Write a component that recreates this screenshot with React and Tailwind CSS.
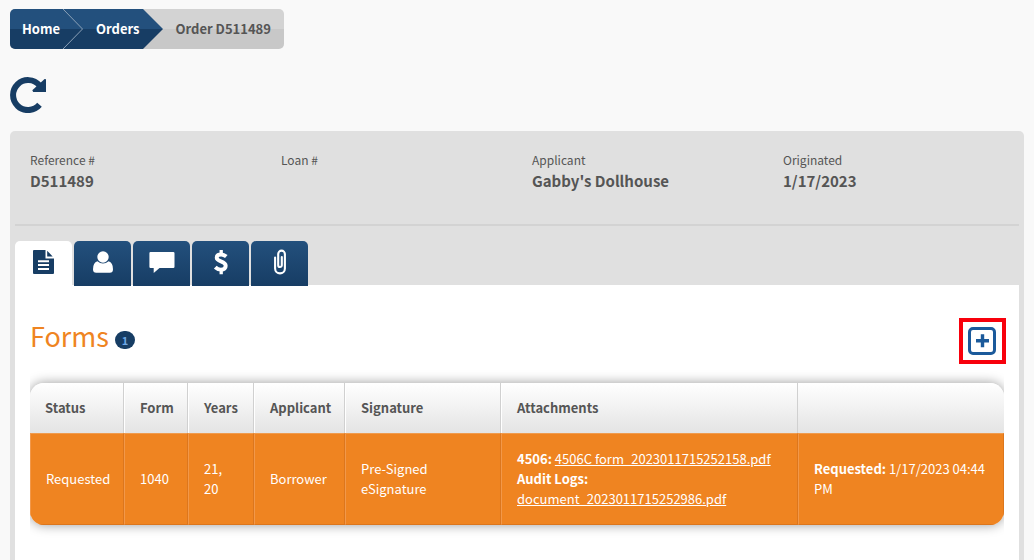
import React, { useState } from "react";

const details = [
  { label: "Reference #", value: "D511489" },
  { label: "Loan #", value: "" },
  { label: "Applicant", value: "Gabby's Dollhouse" },
  { label: "Originated", value: "1/17/2023" },
];

function RepeatIcon() {
  return (
    <svg width="36" height="36" viewBox="0 0 36 36" aria-hidden="true">
      <path
        d="M29.5 8.4A15 15 0 1 0 29.5 27.8"
        fill="none"
        stroke="#173d64"
        strokeWidth="6"
      />
      <path d="M36 2.2V15H23.2l-.9-1.8L34.6 2z" fill="#173d64" />
    </svg>
  );
}

function FileIcon() {
  return (
    <svg width="21" height="24" viewBox="0 0 21 24" fill="currentColor" aria-hidden="true">
      <path
        fillRule="evenodd"
        d="M1 0h11.500v8.500H21V23q0 1-1 1H1q-1 0-1-1V1q0-1 1-1zM5 10.200v2h11v-2zM5 14v2h11v-2zM5 18v2h11v-2z"
      />
      <path d="M14.200.8l5.500 5.700h-5.500z" />
    </svg>
  );
}

function UserIcon() {
  return (
    <svg width="20" height="22" viewBox="0 0 20 22" fill="currentColor" aria-hidden="true">
      <circle cx="10" cy="6" r="5.700" />
      <path d="M4.400 10.200Q7 12.600 10 12.600t5.600-2.400Q20 11.600 20 18.200q0 3.500-3.200 3.500H3.200Q0 21.700 0 18.200q0-6.600 4.400-8z" />
    </svg>
  );
}

function CommentIcon() {
  return (
    <svg width="26" height="22" viewBox="0 0 26 22" fill="currentColor" aria-hidden="true">
      <path d="M1.500 1h22.800q1.200 0 1.200 1.200v13.600q0 1.200-1.200 1.200H10.500L4.700 22V17H1.500Q.4 17 .4 15.800V2.200Q.4 1 1.500 1z" />
    </svg>
  );
}

function DollarIcon() {
  return (
    <svg width="14" height="26" viewBox="0 0 14 26" fill="none" stroke="currentColor" aria-hidden="true">
      <path
        d="M12.300 7.600Q9.800 5.500 7.200 5.500C4.300 5.500 2.700 6.900 2.700 8.800C2.700 13.200 11.700 11.600 11.700 16.800C11.700 19.200 9.800 20.600 7 20.600Q3.800 20.600 1.300 18.200"
        strokeWidth="3.900"
      />
      <path d="M7.200 1V5M7.200 21v4.200" strokeWidth="3.300" />
    </svg>
  );
}

function ClipIcon() {
  return (
    <svg width="12" height="26" viewBox="0 0 12 26" fill="none" stroke="currentColor" aria-hidden="true">
      <path
        d="M4.200 7v9.200a1.800 1.800 0 0 0 3.600 0V8M1.100 8.500v11a4.900 4.900 0 0 0 9.800 0V5a3.350 3.350 0 0 0-6.700 0V8"
        strokeWidth="2.100"
        strokeLinecap="round"
      />
    </svg>
  );
}

const tabs = [
  { name: "Forms", Icon: FileIcon },
  { name: "Applicant", Icon: UserIcon },
  { name: "Messages", Icon: CommentIcon },
  { name: "Billing", Icon: DollarIcon },
  { name: "Files", Icon: ClipIcon },
];

function Breadcrumb() {
  return (
    <nav className="flex h-10 w-fit overflow-hidden rounded-[5px] bg-linear-to-b from-[#d3d3d3] from-50% to-[#c8c8c8] to-50% text-[13px] leading-10 font-bold">
      <div className="flex bg-linear-to-b from-[#23507d] from-50% to-[#173d64] to-50% text-white">
        <a href="#home" className="pr-[3px] pl-3">Home</a>
        <svg width="20" height="40" viewBox="0 0 20 40" aria-hidden="true">
          <path d="M0 0L19.500 20L0 40" fill="none" stroke="#8ba0b7" />
        </svg>
        <a href="#orders" className="pr-[3px] pl-[13px]">Orders</a>
      </div>
      <svg width="20" height="40" viewBox="0 0 20 40" aria-hidden="true">
        <path d="M0 0L20 20H0z" fill="#23507d" />
        <path d="M0 40L20 20H0z" fill="#173d64" />
      </svg>
      <span className="px-[13px] text-[#555]">Order D511489</span>
    </nav>
  );
}

function FormsTable() {
  const th = "border-r border-l border-r-[#d0d0d0] border-l-white px-[15px] py-[15px]";
  const td = "border border-t-[#f09b4d] border-r-[#dc761d] border-b-[#dc761d] border-l-[#f2984a] px-[15px] py-[15px]";

  return (
    <div className="overflow-x-clip">
      <div className="overflow-hidden rounded-[14px] shadow-[0_0_12px_rgba(0,0,0,0.4)]">
        <table className="w-full table-fixed border-separate border-spacing-0 text-left text-[13px] leading-5">
          <colgroup>
            <col className="w-[94px]" />
            <col className="w-[64px]" />
            <col className="w-[66px]" />
            <col className="w-[91px]" />
            <col className="w-[156px]" />
            <col />
            <col className="w-[206px]" />
          </colgroup>
          <thead className="bg-linear-to-b from-white to-[#e4e4e4] text-[#555]">
            <tr>
              <th className="border-r border-[#d0d0d0] px-[15px] py-[15px]">Status</th>
              <th className={th}>Form</th>
              <th className={th}>Years</th>
              <th className={th}>Applicant</th>
              <th className={th}>Signature</th>
              <th className={th}>Attachments</th>
              <td></td>
            </tr>
          </thead>
          <tbody className="bg-[#ef8421] text-white">
            <tr>
              <td className={td}>Requested</td>
              <td className={td}>1040</td>
              <td className={td}>21, 20</td>
              <td className={td}>Borrower</td>
              <td className={td}>Pre-Signed eSignature</td>
              <td className={td}>
                <b>4506:</b>{" "}
                <a href="#form" className="underline">4506C form_2023011715252158.pdf</a>
                <br />
                <b>Audit Logs:</b>
                <br />
                <a href="#log" className="underline">document_2023011715252986.pdf</a>
              </td>
              <td className={td}>
                <b>Requested:</b> 1/17/2023 04:44 PM
              </td>
            </tr>
          </tbody>
        </table>
      </div>
    </div>
  );
}

export default function App() {
  const [active, setActive] = useState("Forms");

  return (
    <div className="flex min-h-screen flex-col bg-[#f9f9f9] px-[10px] pt-[9px] font-['Noto_Sans_CJK_SC',sans-serif] text-[#555]">
      <Breadcrumb />

      <button aria-label="Refresh" className="mt-7 mb-[18px] w-fit">
        <RepeatIcon />
      </button>

      <main className="flex flex-1 flex-col rounded-t-[5px] bg-[#e0e0e0] px-[5px] pt-5">
        <dl className="grid grid-cols-4 border-b-2 border-[#d3d3d3] pb-[33px]">
          {details.map((d) => (
            <div key={d.label} className="px-[15px]">
              <dt className="mb-[2px] text-xs leading-[18px]">{d.label}</dt>
              <dd className="text-[15px] leading-5 font-bold">{d.value}</dd>
            </div>
          ))}
        </dl>

        {/* Tabs */}
        <div role="tablist" className="relative -mb-px flex gap-[2px] pt-[15px]">
          {tabs.map(({ name, Icon }) => (
            <button
              key={name}
              role="tab"
              aria-label={name}
              aria-selected={active === name}
              onClick={() => setActive(name)}
              className={`flex h-[45px] w-[57px] items-center justify-center rounded-t-[5px] pb-[3px] ${
                active === name
                  ? "bg-white text-[#173d64]"
                  : "bg-linear-to-b from-[#23507d] to-[#173d64] text-white"
              }`}
            >
              <Icon />
            </button>
          ))}
        </div>

        <section className="flex-1 bg-white px-[15px] pt-[33px] pb-8">
          <div className="mb-[19px] flex items-start justify-between">
            <div className="flex items-center gap-[6px]">
              <h1 className="text-[27px] leading-9 font-normal text-[#ef8421]">Forms</h1>
              <span className="mt-2 h-[18px] w-5 rounded-full bg-[#173d64] text-center text-[11px] leading-[18px] font-bold text-[#6fa8e6]">
                1
              </span>
            </div>
            <button aria-label="Add form" className="-mr-[2px] border-4 border-[#f8000c] p-[5px]">
              <svg width="29" height="28" viewBox="0 0 29 28" fill="none" stroke="#1b5a9b" strokeWidth="3" aria-hidden="true">
                <rect x="1.500" y="1.500" width="25" height="25" rx="3.500" />
                <path d="M8 13.700h13M14.500 7.200v13" strokeWidth="3.400" />
              </svg>
            </button>
          </div>

          <FormsTable />
        </section>
      </main>
    </div>
  );
}
